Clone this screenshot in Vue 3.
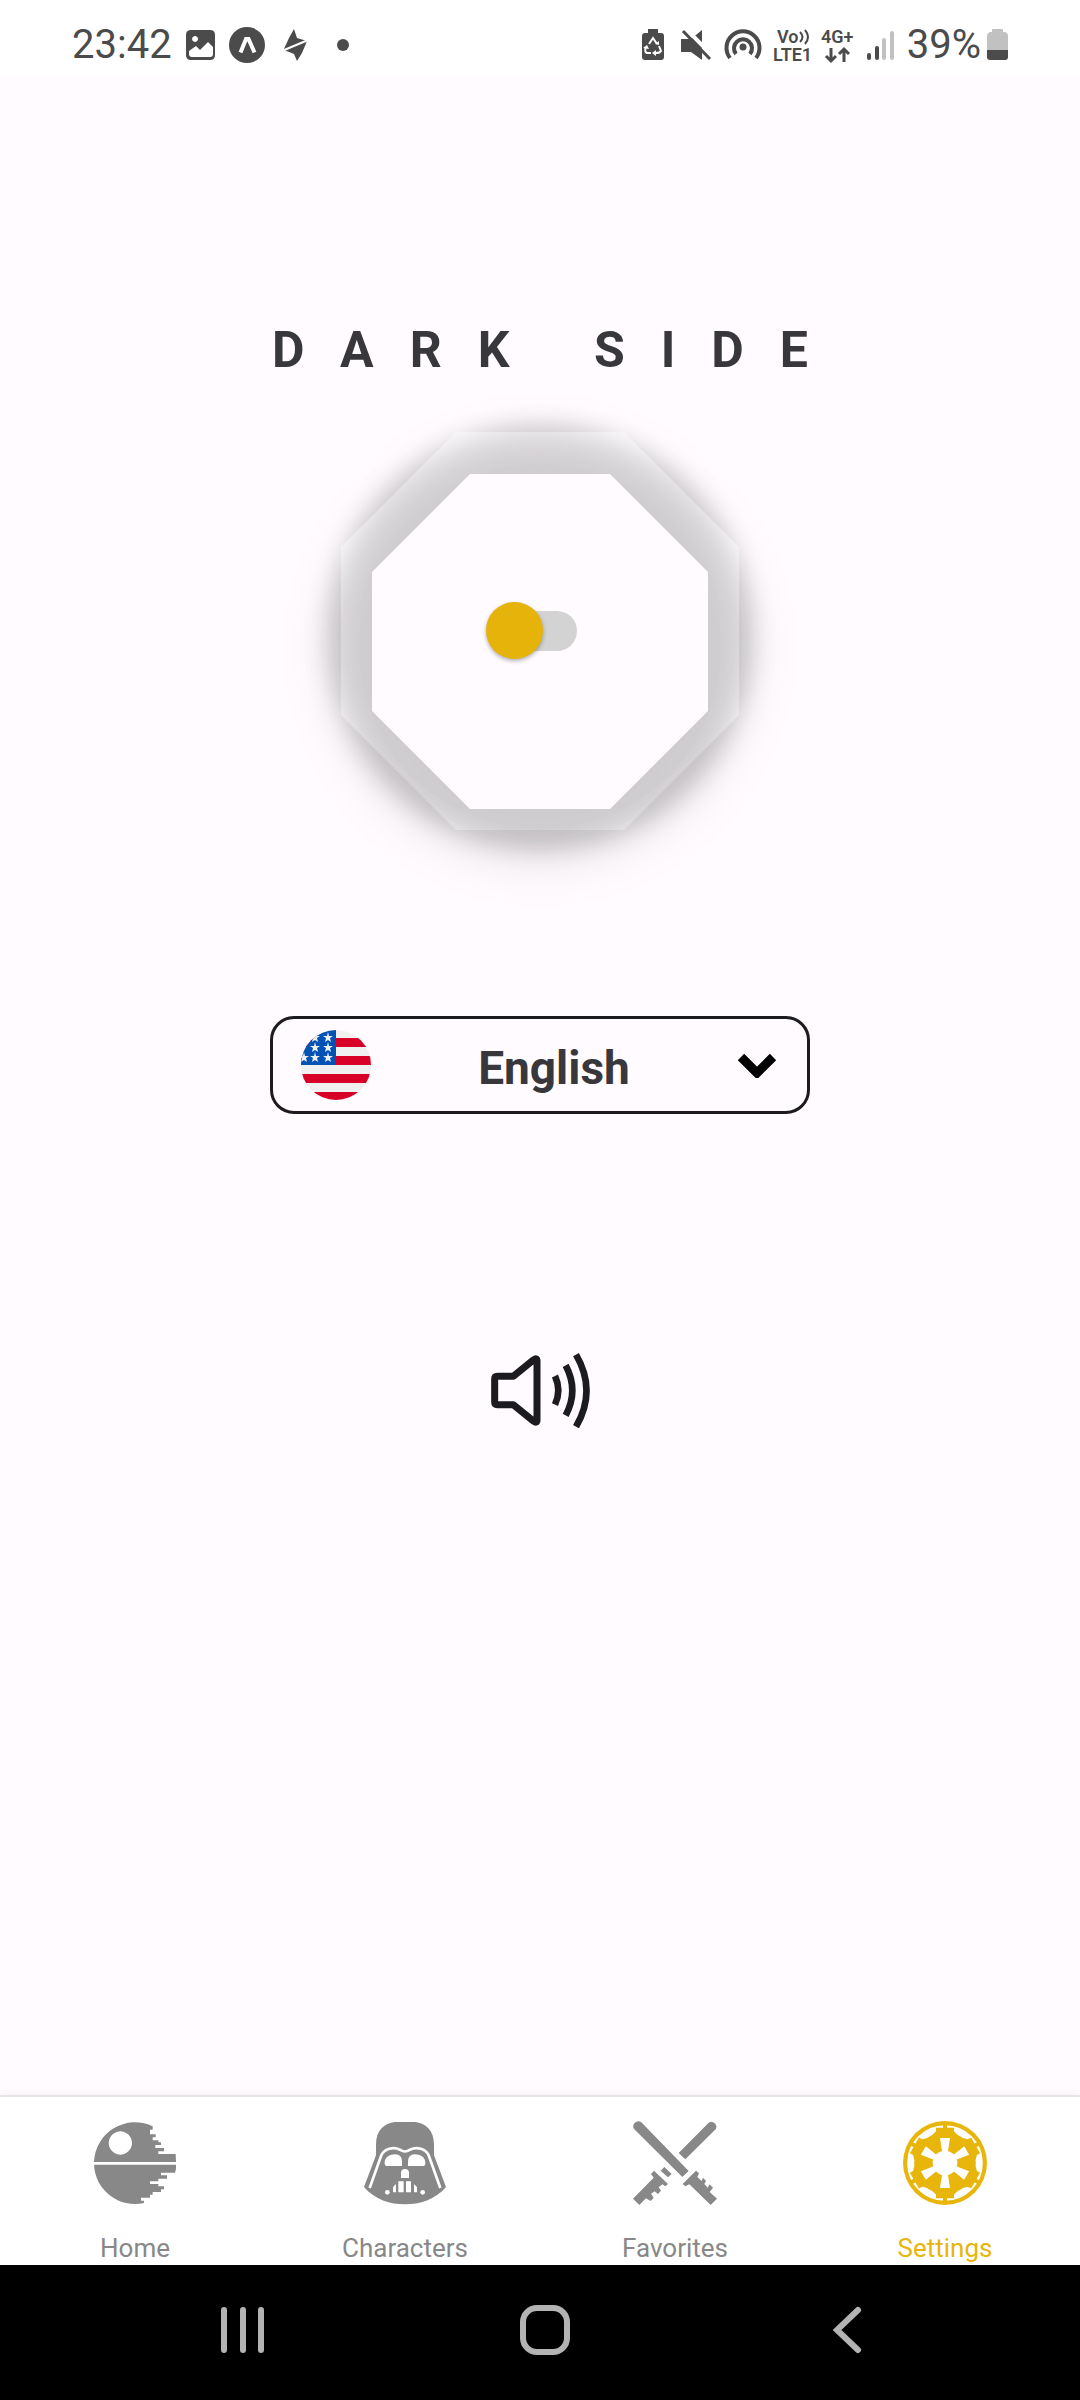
<script setup>
import { ref } from 'vue'

const darkSide = ref(false)
const language = ref('en')
const turns = [0, 60, 120, 180, 240, 300]
const stars = [[14, 7], [27, 7], [14, 17], [27, 17], [3, 27], [14, 27], [27, 27]]
</script>

<template>
  <div class="screen">
    <header class="status">
      <div class="status-side">
        <span class="status-text">23:42</span>
        <svg width="29" height="30" viewBox="0 0 29 30" fill="#4b4b4b">
          <path fill-rule="evenodd" d="M5 0H24Q29 0 29 5V25Q29 30 24 30H5Q0 30 0 25V5Q0 0 5 0ZM3 21V24Q3 27 6 27H24Q27 27 27 24V17L22 12L14 20L10 16ZM9 6a3 3 0 1 0 .1 0Z" />
        </svg>
        <svg width="36" height="36" viewBox="0 0 36 36">
          <circle cx="18" cy="18" r="18" fill="#4b4b4b" />
          <path d="M11.500 25.500L17 12H19.500L25.500 25.500" fill="none" stroke="#fff" stroke-width="4" />
        </svg>
        <svg width="32" height="36" viewBox="0 0 32 36" fill="#4b4b4b">
          <path d="M15 2L18 11L28 14L4 24L10 11ZM5 23L28 14L23 26L18 34L15 27Z" />
          <path d="M4 23.500L28 13.500" stroke="#fff" stroke-width="2" />
        </svg>
        <svg width="36" height="36" viewBox="0 0 36 36"><circle cx="18" cy="18" r="6" fill="#4b4b4b" /></svg>
      </div>
      <div class="status-side status-right">
        <svg width="32" height="36" viewBox="0 0 32 36">
          <path d="M11 2H21V6H24Q27 6 27 9V30Q27 33 24 33H8Q5 33 5 30V9Q5 6 8 6H11Z" fill="#4b4b4b" />
          <path d="M12 17L16 11L20 17M22 19L24 24Q23 26 19 26M14 26H10Q7 25 9 20" fill="none" stroke="#fff" stroke-width="2" />
          <path d="M18 17L22 18L22 14ZM19 23V29L15 26ZM6 21L10 18L12 22Z" fill="#fff" />
        </svg>
        <svg width="34" height="36" viewBox="0 0 34 36" fill="#4b4b4b">
          <path d="M2 12H12L23 3V33L12 25H2Z" />
          <path d="M7 2L34 29" stroke="#fff" stroke-width="4" />
          <path d="M4 4L31 32" stroke="#4b4b4b" stroke-width="3" />
        </svg>
        <svg width="40" height="36" viewBox="0 0 40 36" fill="none" stroke="#4b4b4b" stroke-width="4">
          <path d="M7 31A16.500 16.500 0 1 1 33 31M13 27A9 9 0 1 1 27 27" />
          <circle cx="20" cy="20" r="3.500" fill="#4b4b4b" stroke="none" />
        </svg>
        <svg class="network" width="38" height="36" viewBox="0 0 38 36">
          <text x="4" y="16" font-size="18">Vo</text>
          <path d="M27 5Q32 10 27 15M32 3Q38 10 32 17" fill="none" stroke="#4b4b4b" stroke-width="2" />
          <text x="0" y="34" font-size="18">LTE1</text>
        </svg>
        <svg class="network" width="34" height="36" viewBox="0 0 34 36">
          <text x="0" y="16" font-size="18">4G+</text>
          <path d="M10 21V34M5 29L10 34L15 29M23 35V22M18 27L23 22L28 27" fill="none" stroke="#4b4b4b" stroke-width="3" />
        </svg>
        <svg width="32" height="36" viewBox="0 0 32 36" stroke-width="4" stroke-linecap="round">
          <path d="M4 28V31M12 21V31" stroke="#4b4b4b" />
          <path d="M19 13V31M27 6V31" stroke="#c1c1c1" />
        </svg>
        <div class="charge">
          <span class="status-text">39%</span>
          <svg width="21" height="36" viewBox="0 0 21 36">
            <path d="M5 5V3Q5 2 6 2H15Q16 2 16 3V5H18Q21 6 21 9V24H0V9Q0 6 3 5Z" fill="#c1c1c1" />
            <path d="M0 23H21V30Q21 33 18 33H3Q0 33 0 30Z" fill="#4b4b4b" />
          </svg>
        </div>
      </div>
    </header>

    <main class="content">
      <label class="title" for="dark-side">DARK SIDE</label>
      <div class="stage">
        <svg class="glow" viewBox="-100 -100 598 598" aria-hidden="true">
          <defs>
            <filter id="wide" x="-50%" y="-50%" width="200%" height="200%"><feGaussianBlur stdDeviation="24" /></filter>
            <filter id="tight" x="-50%" y="-50%" width="200%" height="200%"><feGaussianBlur stdDeviation="11" /></filter>
            <radialGradient id="rim" gradientUnits="userSpaceOnUse" cx="199" cy="214" r="220">
              <stop offset=".82" stop-color="#fff" stop-opacity="0" />
              <stop offset="1" stop-color="#fff" stop-opacity=".28" />
            </radialGradient>
          </defs>
          <circle cx="199" cy="218" r="214" fill="#000" fill-opacity=".08" filter="url(#wide)" />
          <circle cx="199" cy="206" r="213" fill="#000" fill-opacity=".17" filter="url(#tight)" />
          <polygon points="115,0 283,0 398,115 398,283 283,398 115,398 0,283 0,115" fill="#fff" fill-opacity=".2" />
          <polygon points="115,0 283,0 398,115 398,283 283,398 115,398 0,283 0,115" fill="url(#rim)" />
          <polygon points="129,42 269,42 367,140 367,279 269,377 129,377 31,279 31,140" fill="#fffbff" />
        </svg>
        <input id="dark-side" v-model="darkSide" class="switch" type="checkbox" role="switch">
      </div>

      <div class="language">
        <svg width="70" height="70" viewBox="0 0 70 70" aria-hidden="true">
          <clipPath id="round"><circle cx="35" cy="35" r="35" /></clipPath>
          <g clip-path="url(#round)">
            <path d="M0 0H70V70H0Z" fill="#f0f0f0" />
            <path d="M0 8H70V17H0ZM0 26H70V35H0ZM0 44H70V53H0ZM0 62H70V70H0Z" fill="#d80027" />
            <path d="M0 0H35V35H0Z" fill="#0052b4" />
            <path v-for="([x, y], i) in stars" :key="i" :transform="`translate(${x} ${y})`" d="M0-5L1-1H5L2 1L3 5L0 3L-3 5L-2 1L-5-1H-1Z" fill="#f0f0f0" />
          </g>
        </svg>
        <select v-model="language" aria-label="Language">
          <option value="en">English</option>
        </select>
        <svg width="40" height="26" viewBox="0 0 40 26" aria-hidden="true">
          <path d="M4 5L20 21L36 5" fill="none" stroke="#000" stroke-width="9" />
        </svg>
      </div>

      <button class="sound" type="button" aria-label="Sound">
        <svg width="100" height="75" viewBox="60 69 300 225" fill="none" stroke="#1c1b1f" stroke-width="21">
          <path d="M82 139H130L190 90Q201 82 201 92V271Q201 281 190 273L130 224H82Q74 224 74 216V147Q74 139 82 139Z" stroke-linejoin="round" />
          <path d="M255 138Q275 181 255 224M287 106Q327 182 287 256M318 74Q381 182 318 290" stroke-width="20" />
        </svg>
      </button>
    </main>

    <nav class="tabs">
      <a href="#home">
        <svg viewBox="69 107 252 252" fill="#888">
          <path fill-rule="evenodd" d="M72 230A123 123 0 0 1 248 123V133H240V147H257V156H248V165H265V171H273V179H256V188H282V198H265V206H317L318 230ZM151 138a35 35 0 1 0 .1 0Z" />
          <path d="M72 238H318V250L315 262H273V270H291V280H265V288H240V296H265V303H282V312H273V320H248V328H240V337H213V346H222V353A123 123 0 0 1 72 238Z" />
        </svg>
        <span>Home</span>
      </a>
      <a href="#characters">
        <svg viewBox="99 107 252 252" fill="#888">
          <path d="M138 178C138 135 162 114 195 110H255C288 114 312 135 312 178V210L348 305C315 343 270 357 225 357S135 343 102 305L138 210Z" />
          <path d="M119 308L154 210C163 189 190 184 210 193Q225 204 240 193C260 184 287 189 296 210L331 308" fill="none" stroke="#fff" stroke-width="8" />
          <g fill="#fff">
            <path d="M164 236C162 215 180 207 196 207Q216 208 216 228V242H170Q165 242 164 236ZM286 236C288 215 270 207 254 207Q234 208 234 228V242H280Q285 242 286 236Z" />
            <path d="M213 278V263A12 12 0 0 1 237 263V278ZM189 305L198 296V321H189ZM205 288H221V321H205ZM228 288H243V321H228ZM252 296L261 305V321H252Z" />
            <circle cx="172" cy="321" r="7" /><circle cx="278" cy="321" r="7" />
          </g>
        </svg>
        <span>Characters</span>
      </a>
      <a href="#favorites">
        <svg viewBox="69 107 252 252" fill="#888">
          <path d="M73 132A15 15 0 0 1 94 111L236 257L217 275ZM296 112A15 15 0 0 1 317 132L226 222L206 203Z" />
          <path d="M163 245L185 266L174 276L152 256ZM132 256L174 296L166 303L157 297L146 306L153 316L144 326L134 318L123 325L131 337L122 347L108 339L88 359L69 340L131 277L123 266Z" />
          <path d="M258 256L267 264L262 275L275 287L279 277L288 287L283 296L293 307L299 297L309 307L299 320L321 340L302 359L238 297L226 303L218 296Z" />
        </svg>
        <span>Favorites</span>
      </a>
      <a href="#settings" class="active" aria-current="page">
        <svg viewBox="-126 -126 252 252" fill="#e8b50a">
          <circle r="126" />
          <circle r="103" fill="none" stroke="#fff" stroke-width="21" />
          <g v-for="a in turns" :key="a" :transform="`rotate(${a})`">
            <path d="M-27-106H27V-95L38-84H-38L-27-95ZM-6-117H6V-90H-6Z" />
            <path d="M-15-75H15L8-30H-8Z" fill="#fff" />
          </g>
          <circle r="37" fill="#fff" />
        </svg>
        <span>Settings</span>
      </a>
    </nav>

    <footer class="system">
      <button type="button" aria-label="Recent apps">
        <svg width="52" height="52" viewBox="0 0 52 52"><path d="M7 6V46M26 6V46M44 6V46" /></svg>
      </button>
      <button type="button" aria-label="Home screen">
        <svg width="52" height="52" viewBox="0 0 52 52"><rect x="4" y="4" width="44" height="44" rx="14" /></svg>
      </button>
      <button type="button" aria-label="Back">
        <svg width="52" height="52" viewBox="0 0 52 52"><path d="M37 6L16 26L37 46" /></svg>
      </button>
    </footer>
  </div>
</template>

<style>
body {
  margin: 0;
  background: #fffbff;
}
</style>

<style scoped>
.screen {
  display: flex;
  flex-direction: column;
  min-height: 100vh;
  background: #fffbff;
  font-family: Roboto, "Liberation Sans", sans-serif;
}

svg {
  display: block;
  flex: none;
}

button {
  padding: 0;
  border: 0;
  background: none;
}

.status {
  display: flex;
  justify-content: space-between;
  padding: 15px 72px 0;
  background: #fff;
  color: #4b4b4b;
}

.status-side {
  display: flex;
  align-items: center;
  gap: 14px;
  height: 60px;
}

.status-right {
  gap: 10px;
}

.status-text {
  font-size: 40px;
  line-height: 60px;
}

.charge {
  display: flex;
  align-items: center;
  gap: 6px;
}

.network {
  overflow: visible;
  font-weight: 600;
  fill: #4b4b4b;
}

.content {
  display: flex;
  flex: 1;
  flex-direction: column;
  align-items: center;
  padding-top: 245px;
}

.title {
  padding-left: 36px;
  color: #38373c;
  font-size: 50px;
  font-weight: 700;
  letter-spacing: 36px;
  line-height: 60px;
  white-space: nowrap;
}

.stage {
  display: grid;
  position: relative;
  place-items: center;
  width: 398px;
  height: 398px;
  margin-top: 52px;
}

.glow {
  position: absolute;
  inset: -100px;
}

.switch {
  position: relative;
  width: 108px;
  height: 58px;
  margin: 0;
  appearance: none;
}

.switch::before {
  position: absolute;
  top: 9px;
  left: 8px;
  width: 83px;
  height: 40px;
  border-radius: 20px;
  background: #d3d3d3;
  content: "";
}

.switch::after {
  position: absolute;
  top: 0;
  left: 0;
  width: 57px;
  height: 57px;
  border-radius: 50%;
  background: #e6b30a;
  box-shadow: 0 2px 4px rgb(0 0 0 / 30%);
  content: "";
}

.switch:checked::after {
  left: 42px;
}

.language {
  display: flex;
  align-items: center;
  width: 50%;
  height: 98px;
  margin-top: 186px;
  padding: 0 30px 0 28px;
  border: 3px solid #1c1b1f;
  border-radius: 24px;
  box-sizing: border-box;
}

.language select {
  flex: 1;
  min-width: 0;
  height: 92px;
  padding: 6px 0 0;
  border: 0;
  background: none;
  color: #38373c;
  font: 700 46px Roboto, "Liberation Sans", sans-serif;
  text-align: center;
  text-align-last: center;
  appearance: none;
}

.sound {
  margin-top: 239px;
}

.tabs {
  display: flex;
  border-top: 2px solid #e5e4e6;
  background: #fff;
  box-shadow: 0 -2px 8px rgb(0 0 0 / 4%);
}

.tabs a {
  display: flex;
  flex: 1;
  flex-direction: column;
  align-items: center;
  gap: 28px;
  padding: 24px 0 2px;
  color: #888;
  font-size: 26px;
  line-height: 30px;
  text-decoration: none;
}

.tabs svg {
  width: 84px;
  height: 84px;
}

.tabs .active {
  color: #e8b50a;
}

.system {
  display: flex;
  height: 135px;
  padding: 0 82px 0 92px;
  background: #000;
}

.system button {
  display: flex;
  flex: 1;
  align-items: center;
  justify-content: center;
  padding-bottom: 6px;
}

.system svg {
  fill: none;
  stroke: #b3b3b3;
  stroke-width: 6;
  stroke-linecap: round;
}
</style>
